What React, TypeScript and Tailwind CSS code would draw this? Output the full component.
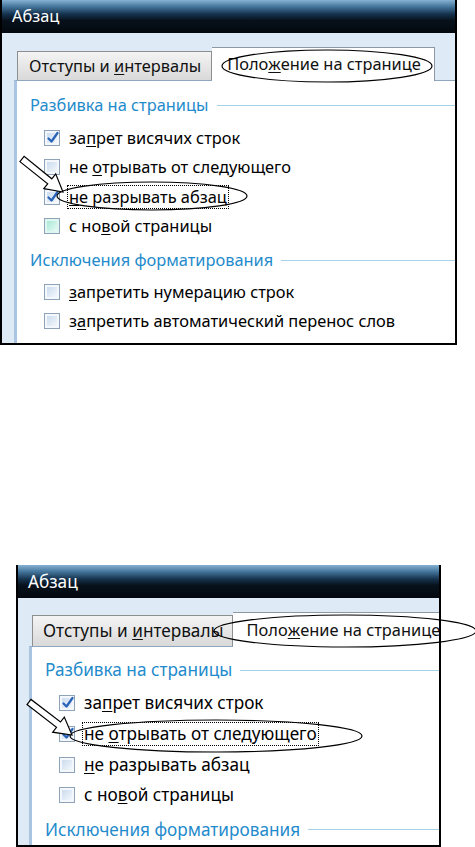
import React from 'react';

type Item = { pre: string; u: string; post: string; checked?: boolean; hover?: boolean; focus?: boolean };

type Cfg = {
  box: string;       // outer size + position
  strip: string;     // tab strip spacing
  panel: string;     // panel offset
  tab1: string;
  tab2: string;
  row: string;
  sec1: Item[];
  sec2: Item[];
};

const Check = ({ checked, hover }: { checked?: boolean; hover?: boolean }) => (
  <div
    className={
      'relative h-[16px] w-[16px] shrink-0 border border-[#8ea2b8] p-[2px] ' +
      (hover ? 'bg-[#dff7ef]' : 'bg-[#f4f7fb]')
    }
  >
    <div
      className={
        'h-full w-full ' +
        (hover
          ? 'bg-gradient-to-br from-[#a9e8d6] to-[#e6fbf4]'
          : 'bg-gradient-to-br from-[#cbdcee] to-[#f3f7fc]')
      }
    />
    {checked && (
      <svg viewBox="0 0 16 16" className="absolute left-[0px] top-[-1px] h-[16px] w-[16px]">
        <path d="M3.5 8.5 L6.5 11.5 L12.5 3" fill="none" stroke="#2a64b8" strokeWidth="2.3" strokeLinecap="round" strokeLinejoin="round" />
      </svg>
    )}
  </div>
);

const Row = ({ it, cls }: { it: Item; cls: string }) => (
  <div className={'flex items-center gap-[9px] pl-[27px] ' + cls}>
    <Check checked={it.checked} hover={it.hover} />
    <span className={'whitespace-pre leading-[20px] ' + (it.focus ? 'outline outline-1 outline-dotted outline-black outline-offset-[1px]' : '')}>
      {it.pre}
      <span className="underline underline-offset-[2px]">{it.u}</span>
      {it.post}
    </span>
  </div>
);

const Header = ({ text, cls }: { text: string; cls?: string }) => (
  <div className={'flex h-[20px] items-center gap-[8px] pl-[13px] text-[#1f8bcc] ' + (cls || '')}>
    <span className="whitespace-nowrap">{text}</span>
    <div className="h-px flex-1 bg-[#a6d2e8]" />
  </div>
);

const Dialog = ({ c }: { c: Cfg }) => (
  <div className={'flex flex-col overflow-hidden border-x-2 border-b-2 border-black bg-[#dfeaf7] ' + c.box}>
    <div className="flex h-[33px] shrink-0 items-center bg-[linear-gradient(to_bottom,#86b2d2_0%,#4a7ca2_18%,#163450_42%,#07111b_62%,#03080e_100%)] pl-[10px] text-white">
      Абзац
    </div>
    <div className={'flex shrink-0 items-end ' + c.strip}>
      <div className={'flex shrink-0 items-center whitespace-pre border border-b-0 border-[#8c8e90] bg-gradient-to-b from-[#f4f4f4] to-[#d9d9d9] text-[#111] ' + c.tab1}>
        {'Отступы и '}
        <span className="underline underline-offset-[2px]">и</span>
        {'нтервалы'}
      </div>
      <div className={'relative z-10 -mb-px flex shrink-0 items-center whitespace-pre border border-b-0 border-l-0 border-[#8c98a4] bg-white text-[#111] ' + c.tab2}>
        {'Поло'}
        <span className="underline underline-offset-[2px]">ж</span>
        {'ение на странице'}
      </div>
    </div>
    <div className={'flex-1 border-l-[3px] border-t border-l-[#a9c5e1] border-t-[#8ea6bf] bg-white ' + c.panel}>
      <Header text="Разбивка на страницы" />
      <div className="mt-[8px]">
        {c.sec1.map((it, i) => (
          <Row key={i} it={it} cls={c.row} />
        ))}
      </div>
      <Header text="Исключения форматирования" cls="mt-[9px]" />
      {c.sec2.length > 0 && (
        <div className="mt-[7px]">
          {c.sec2.map((it, i) => (
            <Row key={i} it={it} cls={c.row} />
          ))}
        </div>
      )}
    </div>
  </div>
);

// white arrow with black outline, tail -> tip
const arrow = (x1: number, y1: number, x2: number, y2: number) => {
  const dx = x2 - x1, dy = y2 - y1;
  const len = Math.hypot(dx, dy);
  const ux = dx / len, uy = dy / len;
  const nx = -uy, ny = ux;
  const w = 3.3, H = 9.5, L = 17;
  const kx = x2 - ux * L, ky = y2 - uy * L;
  const p = [
    [x1 + nx * w, y1 + ny * w],
    [kx + nx * w, ky + ny * w],
    [kx + nx * H, ky + ny * H],
    [x2, y2],
    [kx - nx * H, ky - ny * H],
    [kx - nx * w, ky - ny * w],
    [x1 - nx * w, y1 - ny * w],
  ];
  return p.map(([a, b]) => a.toFixed(1) + ',' + b.toFixed(1)).join(' ');
};

const top: Cfg = {
  box: 'h-[345px] w-[457px] text-[16.4px]',
  strip: 'h-[47px] pl-[15px]',
  panel: 'ml-[12px] pt-[14px]',
  tab1: 'h-[29px] pl-[11px] pr-[10px]',
  tab2: 'h-[34px] pl-[15px] pr-[13px]',
  row: 'h-[29.5px]',
  sec1: [
    { pre: 'за', u: 'п', post: 'рет висячих строк', checked: true },
    { pre: 'не ', u: 'о', post: 'трывать от следующего' },
    { pre: '', u: 'н', post: 'е разрывать абзац', checked: true, focus: true },
    { pre: 'с но', u: 'в', post: 'ой страницы', hover: true },
  ],
  sec2: [
    { pre: '', u: 'з', post: 'апретить нумерацию строк' },
    { pre: 'з', u: 'а', post: 'претить автоматический перенос слов' },
  ],
};

// second screenshot is cut off right under the second section header
const bottom: Cfg = {
  box: 'h-[282px] w-[425px] text-[17.2px]',
  strip: 'h-[48px] pl-[14px]',
  panel: 'ml-[11px] pt-[13px]',
  tab1: 'h-[31px] pl-[10px] pr-[8px]',
  tab2: 'h-[35px] pl-[14px] pr-[14px] text-[16.4px]',
  row: 'h-[30.7px]',
  sec1: [
    { pre: 'за', u: 'п', post: 'рет висячих строк', checked: true },
    { pre: 'не ', u: 'о', post: 'трывать от следующего', checked: true, focus: true },
    { pre: '', u: 'н', post: 'е разрывать абзац' },
    { pre: 'с но', u: 'в', post: 'ой страницы' },
  ],
  sec2: [],
};

const App: React.FC = () => {
  return (
    <div className="relative h-[847px] w-[475px] overflow-hidden bg-white font-['Noto_Sans',sans-serif]">
      <Dialog c={top} />
      <div className="ml-[16px] mt-[220px]">
        <Dialog c={bottom} />
      </div>

      {/* annotations drawn over the screenshots */}
      <svg className="pointer-events-none absolute inset-0 z-20 h-[847px] w-[475px]" viewBox="0 0 475 847">
        <g fill="none" stroke="#000" strokeWidth="1.2">
          <ellipse cx="327" cy="66" rx="105" ry="16" />
          <ellipse cx="152" cy="196" rx="95" ry="14" />
          <ellipse cx="345" cy="631" rx="131" ry="16" />
          <ellipse cx="216" cy="736" rx="146" ry="16" />
        </g>
        <polygon points={arrow(22, 159, 63, 192)} fill="#fff" stroke="#000" strokeWidth="1.2" strokeLinejoin="miter" />
        <polygon points={arrow(29, 702, 72, 735)} fill="#fff" stroke="#000" strokeWidth="1.2" strokeLinejoin="miter" />
      </svg>
    </div>
  );
};

export default App;
